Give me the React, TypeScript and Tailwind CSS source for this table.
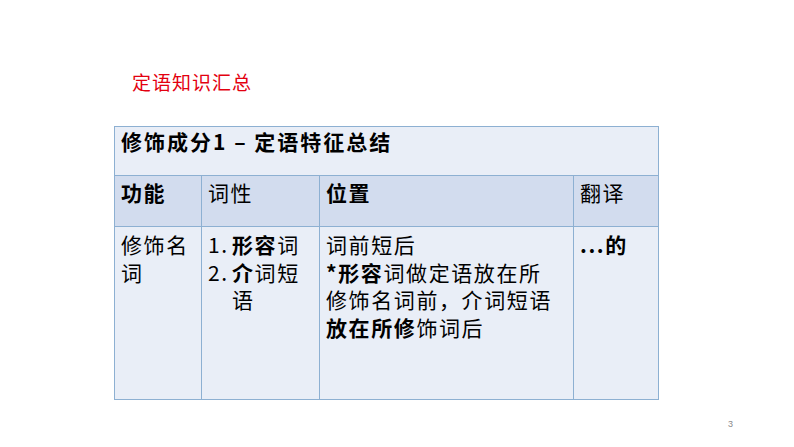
const cjk = "font-['Noto_Sans_CJK_SC','Noto_Sans',sans-serif]";

function B({ children }: { children: React.ReactNode }) {
  return <span className="font-bold">{children}</span>;
}

export default function App() {
  return (
    <div className={`h-[447px] w-[794px] overflow-hidden bg-white ${cjk} text-black`}>
      <div className="pl-[132px] pt-[68px] text-[19px] leading-[28px] tracking-[1px] text-[#e3000f]">
        定语知识汇总
      </div>

      <table className="ml-[114px] mt-[30px] table-fixed border-collapse text-[21px] leading-[27.5px] tracking-[1.6px]">
        <colgroup>
          <col className="w-[87px]" />
          <col className="w-[118px]" />
          <col className="w-[254px]" />
          <col className="w-[85px]" />
        </colgroup>
        <tbody>
          <tr className="h-[49px] bg-[#e9eef7]">
            <td colSpan={4} className="border border-[#8db0d2] px-[6px] pb-[18px] pt-[1px] align-top font-bold tracking-[2px]">
              修饰成分1 – 定语特征总结
            </td>
          </tr>
          <tr className="h-[51px] bg-[#d2dcee]">
            <td className="border border-[#8db0d2] px-[6px] pt-[3px] align-top font-bold">功能</td>
            <td className="border border-[#8db0d2] px-[6px] pt-[3px] align-top">词性</td>
            <td className="border border-[#8db0d2] px-[6px] pt-[3px] align-top font-bold">位置</td>
            <td className="border border-[#8db0d2] px-[6px] pt-[3px] align-top">翻译</td>
          </tr>
          <tr className="h-[173px] bg-[#e9eef7]">
            <td className="border border-[#8db0d2] px-[6px] pt-[4px] align-top">修饰名词</td>
            <td className="border border-[#8db0d2] pl-[6px] pr-[2px] pt-[4px] align-top">
              <div className="flex">
                <span className="w-[24px] shrink-0">1.</span>
                <span>
                  <B>形容</B>词
                </span>
              </div>
              <div className="flex">
                <span className="w-[24px] shrink-0">2.</span>
                <span>
                  <B>介</B>词短语
                </span>
              </div>
            </td>
            <td className="border border-[#8db0d2] px-[6px] pt-[4px] align-top">
              <div>词前短后</div>
              <div>
                <B>*形容</B>词做定语放在所
              </div>
              <div>修饰名词前，介词短语</div>
              <div>
                <B>放在所修</B>饰词后
              </div>
            </td>
            <td className="border border-[#8db0d2] px-[6px] pt-[4px] align-top">
              <B>...的</B>
            </td>
          </tr>
        </tbody>
      </table>

      <div className="flex justify-end pr-[61px] pt-[18px] font-['Liberation_Sans',sans-serif] text-[9px] leading-[12px] text-[#8a8a8a]">
        3
      </div>
    </div>
  );
}
